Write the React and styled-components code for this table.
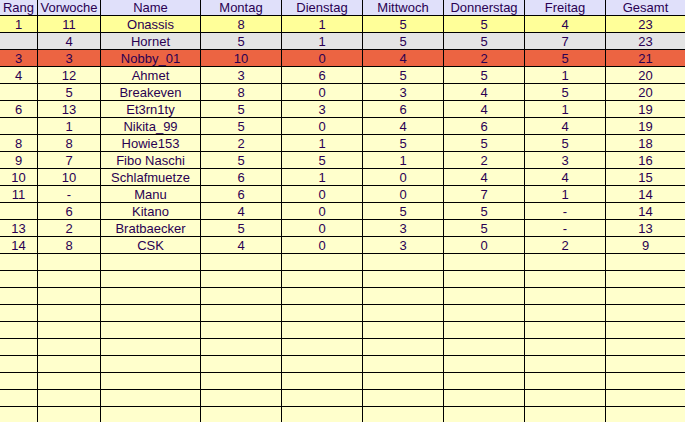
import React from 'react';
import styled, { createGlobalStyle } from 'styled-components';

const columns = ['Rang', 'Vorwoche', 'Name', 'Montag', 'Dienstag', 'Mittwoch', 'Donnerstag', 'Freitag', 'Gesamt'];

const rows = [
  { tone: 'leader', cells: ['1', '11', 'Onassis', '8', '1', '5', '5', '4', '23'] },
  { tone: 'second', cells: ['', '4', 'Hornet', '5', '1', '5', '5', '7', '23'] },
  { tone: 'hot', cells: ['3', '3', 'Nobby_01', '10', '0', '4', '2', '5', '21'] },
  { cells: ['4', '12', 'Ahmet', '3', '6', '5', '5', '1', '20'] },
  { cells: ['', '5', 'Breakeven', '8', '0', '3', '4', '5', '20'] },
  { cells: ['6', '13', 'Et3rn1ty', '5', '3', '6', '4', '1', '19'] },
  { cells: ['', '1', 'Nikita_99', '5', '0', '4', '6', '4', '19'] },
  { cells: ['8', '8', 'Howie153', '2', '1', '5', '5', '5', '18'] },
  { cells: ['9', '7', 'Fibo Naschi', '5', '5', '1', '2', '3', '16'] },
  { cells: ['10', '10', 'Schlafmuetze', '6', '1', '0', '4', '4', '15'] },
  { cells: ['11', '-', 'Manu', '6', '0', '0', '7', '1', '14'] },
  { cells: ['', '6', 'Kitano', '4', '0', '5', '5', '-', '14'] },
  { cells: ['13', '2', 'Bratbaecker', '5', '0', '3', '5', '-', '13'] },
  { cells: ['14', '8', 'CSK', '4', '0', '3', '0', '2', '9'] },
];

const EMPTY_ROWS = 10;

const tones = {
  header: '#e0e0fa',
  leader: '#ffff99',
  second: '#e4e4e4',
  hot: '#ec6442',
  plain: '#ffffcc',
};

const App = () => {
  const blanks = Array.from({ length: EMPTY_ROWS }, () => ({ cells: Array(9).fill('') }));
  return (
    <>
      <GlobalStyle />
      <Sheet>
        <Row>
          {columns.map((c) => (
            <HeadCell key={c}>{c}</HeadCell>
          ))}
        </Row>
        {[...rows, ...blanks].map((r, i) => (
          <Row key={i}>
            {r.cells.map((v, j) => (
              <Cell key={j} $tone={r.tone || 'plain'}>
                {v}
              </Cell>
            ))}
          </Row>
        ))}
      </Sheet>
    </>
  );
};

// Styled components
const GlobalStyle = createGlobalStyle`
  html, body {
    margin: 0;
    padding: 0;
    background: #ffffcc;
    overflow: hidden;
  }
`;

const Sheet = styled.div`
  width: 685px;
  height: 422px;
  overflow: hidden;
  display: flex;
  flex-direction: column;
  gap: 1px;
  background: #000;
  font-family: 'Liberation Sans', Arial, sans-serif;
  font-size: 13px;
  color: #2a0052;
`;

const Row = styled.div`
  display: grid;
  grid-template-columns: 37px 62px 99px 80px 80px 80px 80px 80px 79px;
  gap: 1px;
  flex-shrink: 0;
`;

const HeadCell = styled.div`
  height: 15px;
  line-height: 15px;
  text-align: center;
  white-space: nowrap;
  overflow: hidden;
  background: ${tones.header};
`;

const Cell = styled.div`
  height: 16px;
  line-height: 17px;
  text-align: center;
  white-space: nowrap;
  overflow: hidden;
  background: ${(p) => tones[p.$tone]};
`;

export default App;
